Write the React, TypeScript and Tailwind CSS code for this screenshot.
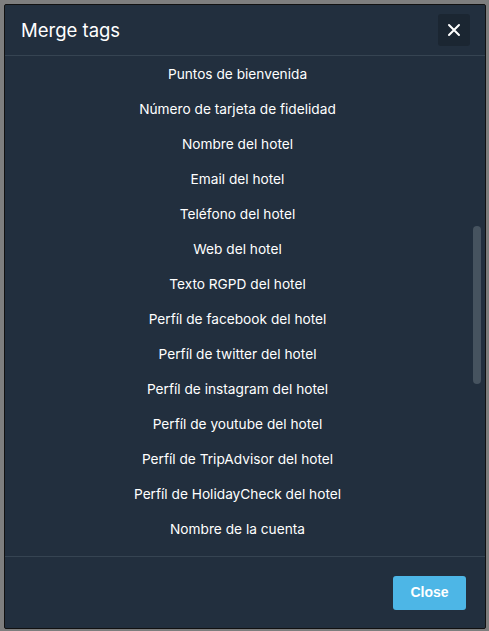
import React from "react";

const items = [
  "Puntos de bienvenida",
  "Número de tarjeta de fidelidad",
  "Nombre del hotel",
  "Email del hotel",
  "Teléfono del hotel",
  "Web del hotel",
  "Texto RGPD del hotel",
  "Perfíl de facebook del hotel",
  "Perfíl de twitter del hotel",
  "Perfíl de instagram del hotel",
  "Perfíl de youtube del hotel",
  "Perfíl de TripAdvisor del hotel",
  "Perfíl de HolidayCheck del hotel",
  "Nombre de la cuenta",
];

export default function App() {
  return (
    <div
      className="w-full h-[631px] bg-[#7e7e7e] pl-[4px] pt-[4px] overflow-hidden"
      style={{ fontFamily: 'Inter, "Liberation Sans", Arial, sans-serif' }}
    >
      <div className="w-[482px] h-[625px] bg-[#222f3e] border border-[#111] rounded-[2px] flex flex-col text-white">
        <div className="h-[51px] flex items-center justify-between pl-[16px] pr-[15px] border-b border-[#364452] shrink-0">
          <div className="text-[18.5px] leading-none">Merge tags</div>
          <button className="w-[32px] h-[32px] rounded-[3px] bg-[#1b2632] flex items-center justify-center">
            <svg width="14" height="14" viewBox="0 0 14 14">
              <path d="M2 2L12 12M12 2L2 12" stroke="white" strokeWidth="2" strokeLinecap="round" />
            </svg>
          </button>
        </div>
        <div className="flex-1 flex min-h-0">
          <div className="flex-1 flex flex-col pt-[1px]">
            {items.map((t) => (
              <div key={t} className="h-[35px] flex items-center justify-center text-[13.7px]">
                {t}
              </div>
            ))}
          </div>
          <div className="w-[15px] relative">
            <div className="absolute left-[3px] top-[170px] w-[8px] h-[158px] rounded-full bg-[#46535f]" />
          </div>
        </div>
        <div className="h-[72px] border-t border-[#364452] flex items-center justify-end pr-[19px] shrink-0">
          <button className="w-[73px] h-[34px] rounded-[3px] bg-[#4db6e6] text-white font-bold text-[14px]" style={{ fontFamily: '"Liberation Sans", Arial, sans-serif' }}>
            Close
          </button>
        </div>
      </div>
    </div>
  );
}
